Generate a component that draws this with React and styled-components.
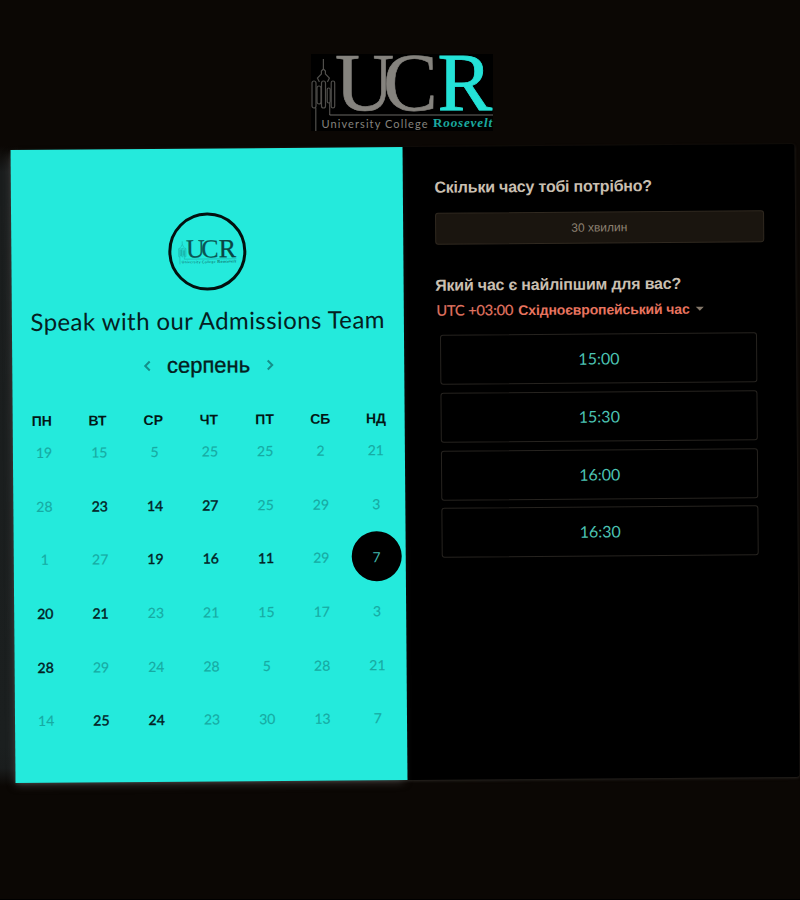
import React from "react";
import styled, { createGlobalStyle, css } from "styled-components";

const Global = createGlobalStyle`
  *, *::before, *::after { box-sizing: border-box; }
  body { margin: 0; background: #0b0704; }
  button { font: inherit; margin: 0; padding: 0; border: 0; background: none; color: inherit; }
`;

const CYAN = "#24eadc";

const Page = styled.div`
  width: 800px;
  height: 900px;
  overflow: hidden;
  border-bottom: 1px solid #000;
  background:
    linear-gradient(#0b0704, #1a1d1d 26px, #1b1f1f 600px, #1a1d1d 622px, #0b0704) 0 146px / 18px 640px no-repeat,
    #0b0704;
  font-family: "Liberation Sans", Arial, sans-serif;
`;

const Header = styled.header`
  height: 147px;
  padding: 54px 0 0 311px;
`;

const LogoSvg = styled.svg`
  display: block;
  overflow: visible;
`;

const Card = styled.main`
  display: flex;
  width: 784px;
  height: 632.5px;
  margin-left: 12.7px;
  transform: rotate(-0.45deg);
  border-radius: 3px;
  background: #000;
  box-shadow: 0 1px 3px #2b2824;
`;

const CalendarPanel = styled.section`
  flex: none;
  display: flex;
  flex-direction: column;
  align-items: center;
  width: 391.5px;
  padding-top: 64px;
  background: ${CYAN};
  box-shadow: -2px 4px 8px -2px rgba(90, 86, 86, 0.6);
`;

const Avatar = styled.div`
  flex: none;
  display: grid;
  place-items: center;
  width: 78px;
  height: 78px;
  border: 3px solid #03100f;
  border-radius: 50%;
`;

const Title = styled.h1`
  margin: 13.5px 0 0;
  height: 32px;
  font: 400 24px/32px Lato, sans-serif;
  letter-spacing: 0.42px;
  color: #05201f;
  white-space: nowrap;
`;

const MonthNav = styled.div`
  display: flex;
  align-items: center;
  justify-content: center;
  gap: 13px;
  height: 30px;
  margin: 14.5px 0 0 1px;
`;

const MonthName = styled.h2`
  margin: 0;
  font-size: 22px;
  font-weight: 400;
  line-height: 30px;
  color: #04201e;
  -webkit-text-stroke: 0.35px #04201e;
`;

const NavButton = styled.button`
  display: grid;
  place-items: center;
  width: 14px;
  height: 20px;
  color: #148f89;
`;

const Weekdays = styled.div`
  display: grid;
  grid-template-columns: repeat(7, 55.7px);
  margin: 29px 0 0 1px;
  height: 20px;
  line-height: 20px;
  text-align: center;
  font-size: 14px;
  font-weight: 700;
  color: #031716;
`;

const Days = styled.div`
  display: grid;
  grid-template-columns: repeat(7, 55.3px);
  grid-auto-rows: 53.6px;
  margin-left: 2.5px;
  margin-top: -5.5px;
`;

const Day = styled.button`
  place-self: center;
  width: 50px;
  height: 50px;
  border-radius: 50%;
  font: 400 14px/51px Lato, sans-serif;
  color: #17aaa3;
  -webkit-text-stroke: 0.15px currentColor;
  ${(p) => p.$open && css`
    color: #03201f;
    -webkit-text-stroke: 0.4px #03201f;
  `}
  ${(p) => p.$selected && css`
    background: #000;
    color: #42b8ad;
    -webkit-text-stroke: 0;
  `}
`;

const BookingPanel = styled.section`
  flex: 1;
  padding: 29.5px 31px 0 32.1px;
`;

const Question = styled.h3`
  margin: 0;
  height: 22px;
  font-size: 16px;
  font-weight: 700;
  line-height: 22px;
  letter-spacing: -0.21px;
  color: #c9bfb0;
  white-space: nowrap;
`;

const Duration = styled.button`
  display: block;
  width: 329px;
  height: 32px;
  margin: 14.8px 0 30px;
  border: 1px solid #302920;
  border-radius: 3px;
  background: #1a150f;
  color: #8d8172;
  font-size: 12px;
`;

const Timezone = styled.button`
  display: flex;
  align-items: center;
  height: 20px;
  margin: 3.5px 0 0 1px;
  color: #e8745f;
  font-size: 14px;
  font-weight: 700;
  letter-spacing: -0.13px;
  white-space: nowrap;
`;

const Offset = styled.span`
  margin-right: 5px;
  font: 400 14.5px/20px Lato, sans-serif;
  letter-spacing: -0.1px;
  color: #e27562;
  -webkit-text-stroke: 0.2px #e27562;
`;

const Caret = styled.span`
  margin-left: 6px;
  border: 4px solid transparent;
  border-top-color: #85786a;
  border-bottom: 0;
`;

const Slots = styled.div`
  display: flex;
  flex-direction: column;
  gap: 7.7px;
  margin: 14.6px 0 0 4.6px;
`;

const Slot = styled.button`
  width: 317px;
  height: 50px;
  border: 1px solid #26231f;
  border-radius: 3px;
  font: 400 16px/46px Lato, sans-serif;
  color: #4cc4b4;
`;

function UcrLogo({ width, ink, accent, ground }) {
  return (
    <LogoSvg width={width} viewBox="0 0 182 77" role="img" aria-label="University College Roosevelt">
      <rect width="182" height="77" fill={ground} />
      <g fill="none" stroke={ink} strokeWidth="1.2" opacity="0.6">
        <path d="M12.400 5v10M12.400 15l-2 2v3l-4 4 2 4M12.400 15l2 2v3l4 4-2 4" />
        <rect x="1" y="27" width="4" height="27" rx="2" />
        <rect x="6" y="32" width="4" height="18" rx="2" />
        <rect x="10.500" y="27" width="4" height="27" rx="2" />
        <rect x="16.200" y="34" width="3" height="15" rx="1.500" />
        <rect x="20.200" y="27" width="3.500" height="27" rx="1.700" />
        <path d="M4.800 54V77M18.700 49V61" />
      </g>
      <path d="M18.700 61H182" stroke={ink} strokeWidth="0.8" />
      <g fontFamily="'Liberation Serif', serif" fontSize="82">
        <text x="24" y="56" fill={ink} stroke={ink} strokeWidth="0.6">U</text>
        <text x="72" y="56" fill={ink} stroke={ink} strokeWidth="0.6">C</text>
        <text x="126.600" y="56" fill={accent} stroke={accent} strokeWidth="0.8">R</text>
      </g>
      <text x="10.500" y="74" fill={ink} fontFamily="Lato, sans-serif" fontSize="11" textLength="106">
        University College
      </text>
      <text
        x="122" y="73" fill={accent} opacity="0.75" fontFamily="'Liberation Serif', serif"
        fontSize="13" fontWeight="700" textLength="59"
      >
        R<tspan fontStyle="italic">oosevelt</tspan>
      </text>
    </LogoSvg>
  );
}

function Chevron({ next }) {
  return (
    <svg width="8" height="12" viewBox="0 0 8 12" fill="none" stroke="currentColor" strokeWidth="2">
      <path d={next ? "M1.500 1.500L6 6 1.500 10.500" : "M6.500 1.500L2 6l4.500 4.500"} />
    </svg>
  );
}

const weekdays = ["ПН", "ВТ", "СР", "ЧТ", "ПТ", "СБ", "НД"];
const days = [
  19, 15, 5, 25, 25, 2, 21,
  28, 23, 14, 27, 25, 29, 3,
  1, 27, 19, 16, 11, 29, 7,
  20, 21, 23, 21, 15, 17, 3,
  28, 29, 24, 28, 5, 28, 21,
  14, 25, 24, 23, 30, 13, 7,
];
const openDays = new Set([8, 9, 10, 16, 17, 18, 21, 22, 28, 36, 37]);
const selectedDay = 20;
const slots = ["15:00", "15:30", "16:00", "16:30"];

export default function App() {
  return (
    <Page>
      <Global />
      <Header>
        <UcrLogo width={182} ink="#85837e" accent="#24e2d7" ground="#000" />
      </Header>
      <Card>
        <CalendarPanel>
          <Avatar>
            <UcrLogo width={58} ink="#0b5553" accent="#0a4543" ground="none" />
          </Avatar>
          <Title>Speak with our Admissions Team</Title>
          <MonthNav>
            <NavButton aria-label="Попередній місяць"><Chevron /></NavButton>
            <MonthName>серпень</MonthName>
            <NavButton aria-label="Наступний місяць"><Chevron next /></NavButton>
          </MonthNav>
          <Weekdays>
            {weekdays.map((name) => <span key={name}>{name}</span>)}
          </Weekdays>
          <Days>
            {days.map((day, i) => (
              <Day key={i} $open={openDays.has(i)} $selected={i === selectedDay}>{day}</Day>
            ))}
          </Days>
        </CalendarPanel>
        <BookingPanel>
          <Question>Скільки часу тобі потрібно?</Question>
          <Duration>30 хвилин</Duration>
          <Question>Який час є найліпшим для вас?</Question>
          <Timezone>
            <Offset>UTC +03:00</Offset>
            Східноєвропейський час
            <Caret />
          </Timezone>
          <Slots>
            {slots.map((time) => <Slot key={time}>{time}</Slot>)}
          </Slots>
        </BookingPanel>
      </Card>
    </Page>
  );
}
